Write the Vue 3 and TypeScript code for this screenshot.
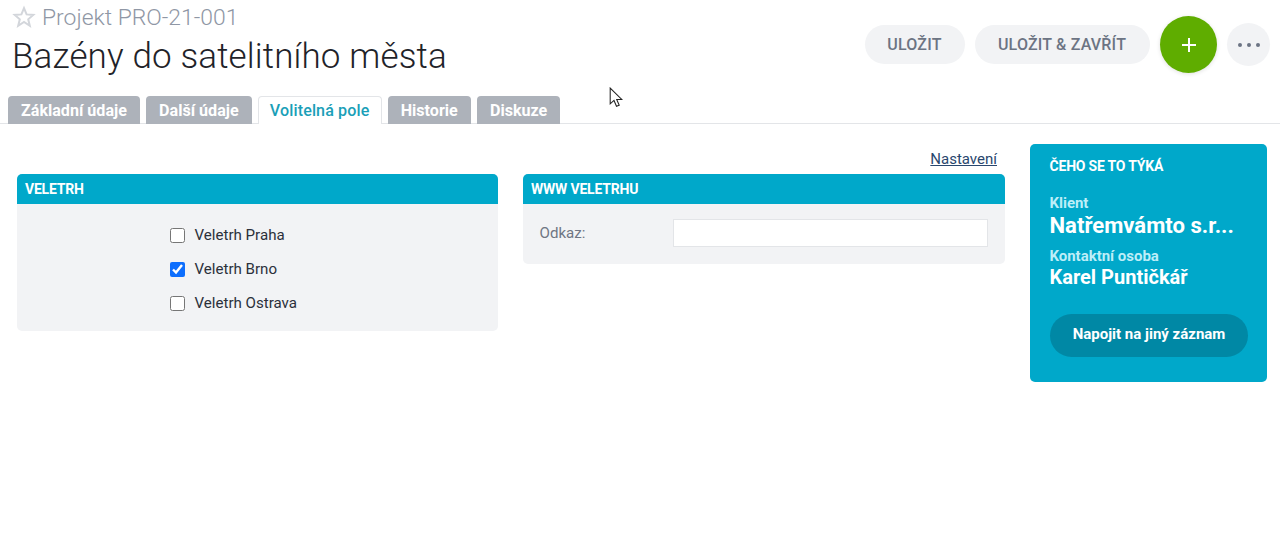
<script setup lang="ts">
const tabs: { label: string; active?: boolean }[] = [
  { label: 'Základní údaje' },
  { label: 'Další údaje' },
  { label: 'Volitelná pole', active: true },
  { label: 'Historie' },
  { label: 'Diskuze' },
]
const fairs = [
  { label: 'Veletrh Praha', checked: false },
  { label: 'Veletrh Brno', checked: true },
  { label: 'Veletrh Ostrava', checked: false },
]
</script>

<template>
  <div class="page">
    <header class="top">
      <div class="titles">
        <div class="crumb">
          <svg class="star" width="24" height="24" viewBox="0 0 24 24" fill="none" stroke="#d3d6db" stroke-width="2" stroke-linejoin="miter">
            <path d="M12 3.2l2.6 6.2 6.7.5-5.1 4.4 1.6 6.5L12 17l-5.8 3.8 1.6-6.5-5.1-4.4 6.7-.5z" />
          </svg>
          <span>Projekt PRO-21-001</span>
        </div>
        <h1>Bazény do satelitního města</h1>
      </div>
      <div class="actions">
        <button class="pill save">ULOŽIT</button>
        <button class="pill close">ULOŽIT &amp; ZAVŘÍT</button>
        <button class="plus" aria-label="Přidat">
          <svg width="16" height="16" viewBox="0 0 16 16"><path d="M8 1v14M1 8h14" stroke="#fff" stroke-width="2" /></svg>
        </button>
        <button class="more" aria-label="Více">
          <svg width="24" height="6" viewBox="0 0 24 6" fill="#6c7483"><circle cx="3" cy="3" r="2" /><circle cx="12" cy="3" r="2" /><circle cx="21" cy="3" r="2" /></svg>
        </button>
      </div>
    </header>

    <nav class="tabs">
      <a v-for="t in tabs" :key="t.label" class="tab" :class="{ active: t.active }">{{ t.label }}</a>
    </nav>

    <main class="content">
      <div class="left">
        <div class="settings"><a>Nastavení</a></div>
        <div class="cards">
          <section class="card">
            <h2>VELETRH</h2>
            <div class="checks">
              <label v-for="f in fairs" :key="f.label" class="check">
                <input type="checkbox" :checked="f.checked" />
                <span>{{ f.label }}</span>
              </label>
            </div>
          </section>
          <section class="card">
            <h2>WWW VELETRHU</h2>
            <div class="field">
              <label>Odkaz:</label>
              <input type="text" />
            </div>
          </section>
        </div>
      </div>
      <aside class="side">
        <h3>ČEHO SE TO TÝKÁ</h3>
        <div class="lbl first">Klient</div>
        <div class="big">Natřemvámto s.r...</div>
        <div class="lbl second">Kontaktní osoba</div>
        <div class="mid">Karel Puntičkář</div>
        <button class="link">Napojit na jiný záznam</button>
      </aside>
    </main>

    <svg class="cursor" width="15" height="21" viewBox="0 0 14 20">
      <path d="M1 1v15l3.6-3.2 2.4 5.6 2.6-1.1-2.4-5.4H12z" fill="#fff" stroke="#222" stroke-width="1" stroke-linejoin="miter" />
    </svg>
  </div>
</template>

<style>
html, body { background: #fff; }
</style>

<style scoped>
.page {
  position: relative;
  width: 1280px;
  height: 556px;
  overflow: hidden;
  background: #fff;
  font-family: Roboto, "Liberation Sans", sans-serif;
  color: #2b303b;
}
.top {
  display: flex;
  justify-content: space-between;
  height: 96px;
  padding: 0 10px 0 12px;
  box-sizing: border-box;
}
.crumb {
  display: flex;
  align-items: center;
  gap: 6px;
  height: 34px;
  font-size: 22.9px;
  font-weight: 300;
  color: #8f97a5;
}
.star { flex: none; margin-top: -1px; }
h1 {
  margin: 2px 0 0;
  font-size: 35px;
  line-height: 42px;
  font-weight: 300;
  color: #1f2329;
  letter-spacing: .13px;
}
.actions {
  display: flex;
  align-items: flex-start;
  padding-top: 16px;
  gap: 10px;
}
button { font-family: inherit; border: 0; cursor: pointer; }
.pill {
  height: 39px;
  margin-top: 9px;
  padding: 0 1px 0 0;
  border-radius: 20px;
  background: #f2f3f5;
  color: #6c7483;
  font-size: 16px;
  font-weight: 500;
  letter-spacing: .2px;
}
.save { width: 100px; }
.close { width: 175px; }
.plus {
  display: flex;
  align-items: center;
  justify-content: center;
  width: 57px;
  height: 57px;
  border-radius: 50%;
  background: #5fad00;
  box-shadow: 0 1px 4px rgba(0, 0, 0, .12);
}
.more {
  display: flex;
  align-items: center;
  justify-content: center;
  width: 43px;
  height: 43px;
  margin-top: 7px;
  border-radius: 50%;
  background: #f2f3f5;
}
.tabs {
  display: flex;
  gap: 6.2px;
  height: 27px;
  padding-left: 8px;
  border-bottom: 1px solid #e3e5e8;
}
.tab {
  display: flex;
  align-items: center;
  padding: 0 13px;
  height: 28px;
  box-sizing: border-box;
  border-radius: 4px 4px 0 0;
  background: #adb2ba;
  color: #fff;
  font-size: 16.1px;
  font-weight: 700;
}
.tab.active {
  background: #fff;
  color: #1b9fb8;
  font-weight: 500;
  letter-spacing: .12px;
  border: 1px solid #e3e5e8;
  border-bottom: 0;
  padding: 0 11px;
}
.content {
  display: flex;
  gap: 25px;
  padding: 20px 13px 0 17px;
  align-items: flex-start;
}
.left { width: 988px; flex: none; }
.settings {
  height: 30px;
  padding-right: 8px;
  text-align: right;
  font-size: 15px;
  line-height: 30px;
}
.settings a { color: #29476e; text-decoration: underline; }
.cards {
  display: grid;
  grid-template-columns: 481px 482px;
  gap: 25px;
  align-items: start;
}
.card {
  background: #f2f3f5;
  border-radius: 5px;
  overflow: hidden;
}
h2 {
  margin: 0;
  height: 30px;
  padding: 0 8px;
  background: #00a8ca;
  color: #fff;
  font-size: 14px;
  font-weight: 700;
  line-height: 30px;
  letter-spacing: -.2px;
}
.checks {
  display: flex;
  flex-direction: column;
  gap: 10px;
  padding: 19px 0 16px 153px;
}
.check {
  display: flex;
  align-items: center;
  gap: 9.5px;
  height: 24px;
  font-size: 15.1px;
  color: #2b303b;
}
.check input {
  width: 15px;
  height: 15px;
  margin: 0;
  accent-color: #0d6efd;
}
.field {
  display: flex;
  align-items: center;
  padding: 15px 17px 17px 16.5px;
}
.field label {
  width: 133.5px;
  font-size: 15.1px;
  color: #6f7683;
}
.field input {
  flex: 1;
  min-width: 0;
  height: 28px;
  box-sizing: border-box;
  background: #fff;
  border: 1px solid #e3e5e8;
  padding: 0 8px;
}
.side {
  width: 237px;
  height: 238px;
  box-sizing: border-box;
  padding: 14px 19px 0 20px;
  border-radius: 5px;
  background: #00a8ca;
  color: #fff;
}
h3, .lbl, .big, .mid { margin-left: -.5px; }
h3 {
  margin-top: 0;
  margin-bottom: 0;
  font-size: 14px;
  font-weight: 700;
  line-height: 16px;
  letter-spacing: -.2px;
}
.lbl {
  font-size: 15px;
  font-weight: 700;
  line-height: 16px;
  color: #bdeef8;
  letter-spacing: -.03px;
}
.lbl.first { margin-top: 21px; }
.lbl.second { margin-top: 9px; }
.big {
  font-size: 22.1px;
  font-weight: 700;
  line-height: 28px;
  white-space: nowrap;
}
.mid {
  font-size: 20px;
  font-weight: 700;
  line-height: 26px;
}
.link {
  display: block;
  width: 198px;
  height: 43px;
  margin-top: 24px;
  padding: 0 0 3px;
  border-radius: 22px;
  background: #0088a5;
  color: #fff;
  font-size: 15px;
  font-weight: 700;
}
.cursor {
  position: absolute;
  left: 609px;
  top: 87px;
}
</style>
